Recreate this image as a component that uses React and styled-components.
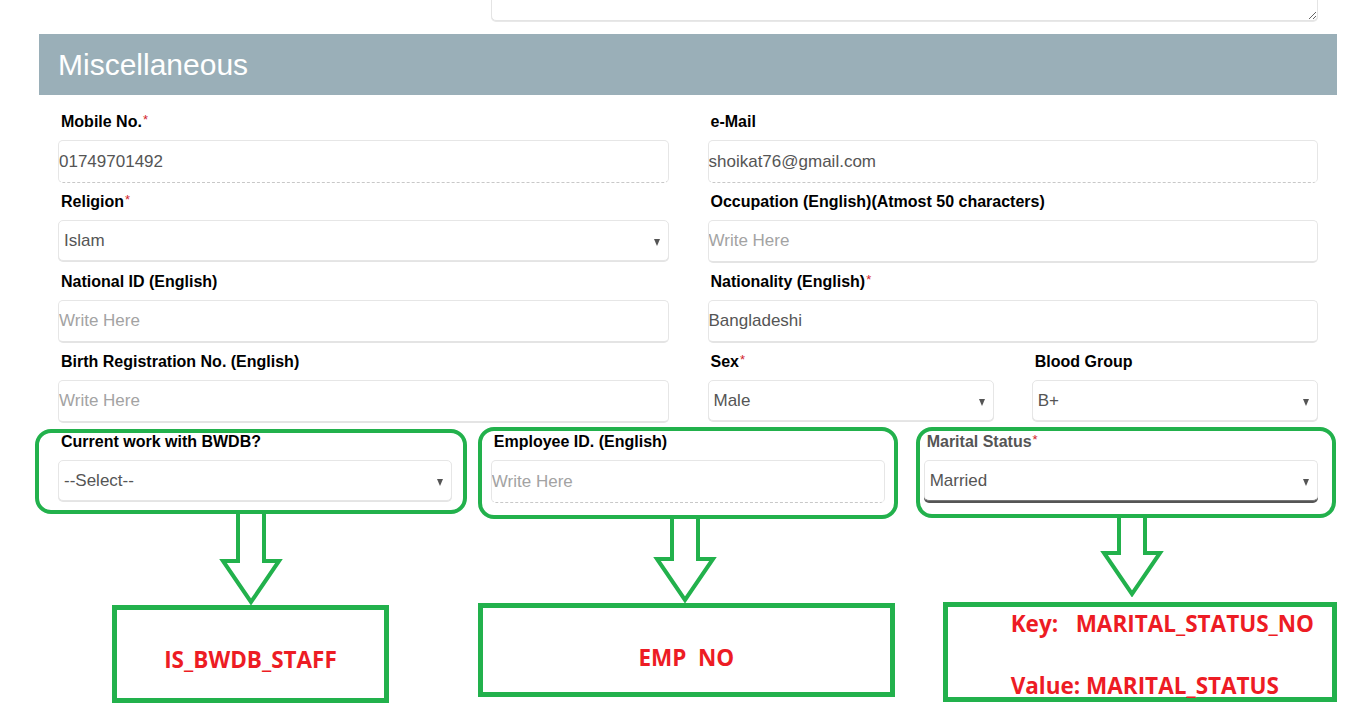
import React from "react";
import styled, { createGlobalStyle } from "styled-components";

const GlobalStyle = createGlobalStyle`
  body {
    margin: 0;
    background: #fff;
    font-family: "Liberation Sans", Arial, sans-serif;
  }
`;

const green = "#22b14c";
const red = "#ed1c24";

const Page = styled.div`
  width: 1372px;
  height: 712px;
  overflow: hidden;
  background: #fff;
`;

const Container = styled.div`
  width: 1298px;
  margin-left: 39px;
`;

const TopRow = styled.div`
  display: grid;
  grid-template-columns: repeat(3, minmax(0, 1fr));
  column-gap: 38.5px;
  padding: 0 19px;
  height: 22px;
  overflow: hidden;
`;

const TextArea = styled.textarea`
  grid-column: 2 / span 2;
  height: 60px;
  margin-top: -39px;
  border: 1px solid #e4e4e4;
  border-radius: 5px;
  box-shadow: 0 1px 0 #e8e8e8;
  resize: vertical;
  box-sizing: border-box;
  outline: none;
`;

const SectionHead = styled.div`
  margin-top: 12px;
  height: 61px;
  background: #9aafb8;
  display: flex;
  align-items: center;
  padding-left: 19px;
  color: #fff;
  font-size: 30px;
`;

const Body = styled.div`
  padding: 17px 19px 0;
`;

const Row = styled.div`
  display: grid;
  grid-template-columns: ${(p) =>
    p.$cols === 3 ? "repeat(3, minmax(0, 1fr))" : "repeat(2, minmax(0, 1fr))"};
  column-gap: ${(p) => (p.$cols === 3 ? "38.5px" : "39px")};
`;

const Field = styled.div`
  display: flex;
  flex-direction: column;
  padding-bottom: ${(p) => (p.$last ? "0" : "9px")};
  position: relative;

  ${(p) =>
    p.$box &&
    `
    &::before {
      content: "";
      position: absolute;
      inset: ${p.$box};
      border: 4px solid ${green};
      border-radius: 16px;
      pointer-events: none;
    }
  `}
`;

const Label = styled.label`
  height: 20px;
  line-height: 20px;
  margin: 0 0 8px 3px;
  font-size: 16px;
  font-weight: 700;
  color: ${(p) => (p.$muted ? "#555" : "#000")};
  white-space: nowrap;
`;

const Req = styled.span`
  color: #d2232a;
  font-size: 13px;
  font-weight: 400;
  vertical-align: top;
  line-height: 16px;
  margin-left: 1px;
`;

const TextInput = styled.input`
  height: 43px;
  box-sizing: border-box;
  width: 100%;
  border: 1px solid #e6e6e6;
  border-bottom: ${(p) => (p.$dashed ? "1px dashed #c8c8c8" : "2px solid #e4e4e4")};
  border-radius: 5px;
  padding: 0 1px 0 0;
  font-family: "Liberation Sans", Arial, sans-serif;
  font-size: 17px;
  color: #555;
  background: #fff;
  outline: none;

  &::placeholder {
    color: #a3a3a3;
  }
`;

const SelectWrap = styled.div`
  position: relative;

  &::after {
    content: "";
    position: absolute;
    right: 9px;
    top: 50%;
    margin-top: -2px;
    border-left: 3.5px solid transparent;
    border-right: 3.5px solid transparent;
    border-top: 7px solid #555;
    pointer-events: none;
  }
`;

const Select = styled.select`
  appearance: none;
  width: 100%;
  height: 41px;
  box-sizing: border-box;
  border: 1px solid #e6e6e6;
  border-radius: 5px;
  box-shadow: ${(p) => (p.$focus ? "0 2px 0 #555" : "0 1px 0 #e4e4e4")};
  border-bottom-color: ${(p) => (p.$focus ? "#777" : "#e6e6e6")};
  padding: 0 5px;
  font-family: "Liberation Sans", Arial, sans-serif;
  font-size: 17px;
  color: #555;
  background: #fff;
  outline: none;
`;

const SubRow = styled.div`
  display: grid;
  grid-template-columns: repeat(2, minmax(0, 1fr));
  column-gap: 38px;
`;

const NoteRow = styled.div`
  display: grid;
  grid-template-columns: repeat(3, minmax(0, 1fr));
  column-gap: 38.5px;
`;

const NoteColumn = styled.div`
  display: flex;
  flex-direction: column;
  align-items: flex-start;
  min-width: 0;
`;

const ArrowSvg = styled.svg`
  display: block;
  flex-shrink: 0;
  margin-left: ${(p) => p.$x}px;
  margin-top: ${(p) => p.$top}px;
`;

const Note = styled.div`
  box-sizing: border-box;
  flex-shrink: 0;
  width: ${(p) => p.$w}px;
  height: ${(p) => p.$h}px;
  margin-left: ${(p) => p.$x}px;
  margin-top: ${(p) => p.$gap}px;
  border: 5px solid ${green};
  display: flex;
  flex-direction: ${(p) => (p.$stack ? "column" : "row")};
  align-items: ${(p) => (p.$stack ? "flex-start" : "center")};
  justify-content: ${(p) => (p.$stack ? "flex-start" : "center")};
  padding: ${(p) => p.$pad};
  font-family: "Open Sans", "Liberation Sans", sans-serif;
  font-weight: 700;
  font-size: 22.5px;
  color: ${red};
  white-space: pre;
`;

const NoteLine = styled.div`
  line-height: 30px;
  margin-bottom: ${(p) => p.$gap || 0}px;
`;

const Arrow = ({ x, top, h }) => (
  <ArrowSvg $x={x} $top={top} width="64" height={h} viewBox={`0 0 64 ${h}`}>
    <polyline
      points={`19,0 19,${h - 44} 4,${h - 44} 32,${h - 3} 60,${h - 44} 45,${h - 44} 45,0`}
      fill="none"
      stroke={green}
      strokeWidth="4"
      strokeLinejoin="miter"
    />
  </ArrowSvg>
);

const Dropdown = ({ value, focus }) => (
  <SelectWrap>
    <Select $focus={focus} defaultValue={value}>
      <option>{value}</option>
    </Select>
  </SelectWrap>
);

export default function App() {
  return (
    <Page>
      <GlobalStyle />
      <Container>
        <TopRow>
          <TextArea />
        </TopRow>
        <SectionHead>Miscellaneous</SectionHead>
        <Body>
          <Row>
            <Field>
              <Label>Mobile No.<Req>*</Req></Label>
              <TextInput $dashed defaultValue="01749701492" />
            </Field>
            <Field>
              <Label>e-Mail</Label>
              <TextInput $dashed defaultValue="shoikat76@gmail.com" />
            </Field>
          </Row>
          <Row>
            <Field>
              <Label>Religion<Req>*</Req></Label>
              <Dropdown value="Islam" />
            </Field>
            <Field>
              <Label>Occupation (English)(Atmost 50 characters)</Label>
              <TextInput placeholder="Write Here" />
            </Field>
          </Row>
          <Row>
            <Field>
              <Label>National ID (English)</Label>
              <TextInput placeholder="Write Here" />
            </Field>
            <Field>
              <Label>Nationality (English)<Req>*</Req></Label>
              <TextInput defaultValue="Bangladeshi" />
            </Field>
          </Row>
          <Row>
            <Field>
              <Label>Birth Registration No. (English)</Label>
              <TextInput placeholder="Write Here" />
            </Field>
            <SubRow>
              <Field>
                <Label>Sex<Req>*</Req></Label>
                <Dropdown value="Male" />
              </Field>
              <Field>
                <Label>Blood Group</Label>
                <Dropdown value="B+" />
              </Field>
            </SubRow>
          </Row>
          <Row $cols={3}>
            <Field $last $box="-3px -15px -11px -23px">
              <Label>Current work with BWDB?</Label>
              <Dropdown value="--Select--" />
            </Field>
            <Field $last $box="-5px -13px -16px -13px">
              <Label>Employee ID. (English)</Label>
              <TextInput $dashed placeholder="Write Here" />
            </Field>
            <Field $last $box="-5px -18px -15px -8px">
              <Label $muted>Marital Status<Req>*</Req></Label>
              <Dropdown value="Married" focus />
            </Field>
          </Row>
          <NoteRow>
            <NoteColumn>
              <Arrow x={161} top={8} h={94} />
              <Note $w={277} $h={98} $x={54} $gap={0} $pad="10px 0 0">
                IS_BWDB_STAFF
              </Note>
            </NoteColumn>
            <NoteColumn>
              <Arrow x={162} top={13} h={87} />
              <Note $w={417} $h={94} $x={-13} $gap={0} $pad="14px 0 0">
                EMP  NO
              </Note>
            </NoteColumn>
            <NoteColumn>
              <Arrow x={176} top={12} h={82} />
              <Note $stack $w={394} $h={100} $x={19} $gap={5} $pad="2px 0 0 63px">
                <NoteLine $gap={32}>Key:   MARITAL_STATUS_NO</NoteLine>
                <NoteLine>Value: MARITAL_STATUS</NoteLine>
              </Note>
            </NoteColumn>
          </NoteRow>
        </Body>
      </Container>
    </Page>
  );
}
